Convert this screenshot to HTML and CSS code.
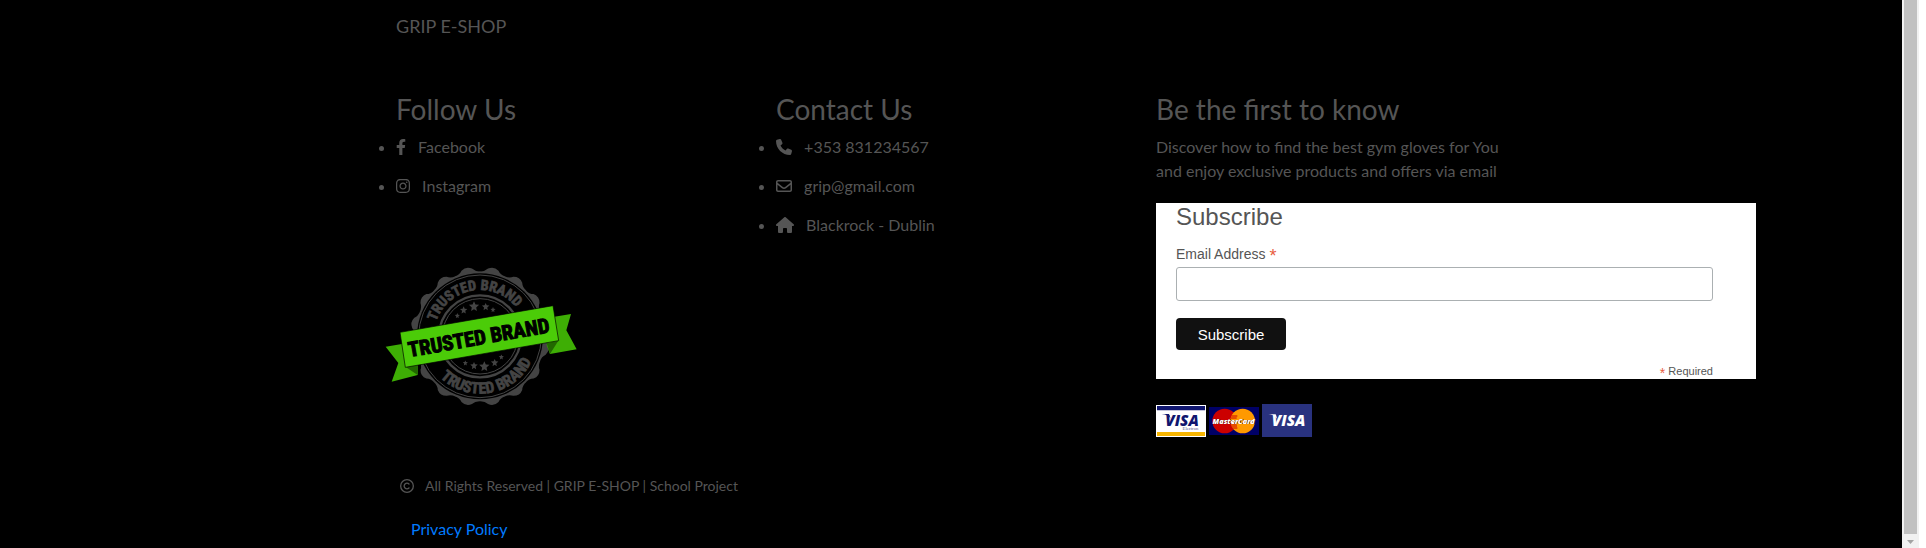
FILE: index.html
```html
<!DOCTYPE html>
<html lang="en">
<head>
<meta charset="utf-8">
<title>GRIP E-SHOP</title>
<link rel="stylesheet" href="styles.css">
</head>
<body>
<footer class="footer">
  <div class="container">
    <p class="brand">GRIP E-SHOP</p>
    <div class="columns">
      <section class="column">
        <h3 class="heading">Follow Us</h3>
        <ul class="links">
          <li><svg class="icon icon-narrow" viewBox="0 0 320 512" aria-hidden="true"><path d="M279.14 288l14.22-92.66h-88.91v-60.13c0-25.35 12.42-50.06 52.24-50.06h40.42V6.26S260.43 0 225.36 0c-73.22 0-121.08 44.38-121.08 124.72v70.62H22.89V288h81.39v224h100.17V288z"/></svg>
            Facebook</li>
          <li><svg class="icon icon-medium" viewBox="0 0 448 512" aria-hidden="true"><path d="M224.1 141c-63.6 0-114.9 51.3-114.9 114.9s51.3 114.9 114.9 114.9S339 319.500 339 255.900 287.700 141 224.100 141zm0 189.600c-41.100 0-74.700-33.500-74.700-74.700s33.500-74.700 74.700-74.700 74.700 33.500 74.700 74.700-33.600 74.700-74.700 74.700zm146.400-194.300c0 14.900-12 26.800-26.800 26.800-14.900 0-26.800-12-26.800-26.800s12-26.800 26.800-26.800 26.800 12 26.800 26.800zm76.100 27.200c-1.700-35.900-9.900-67.700-36.200-93.900-26.200-26.200-58-34.400-93.900-36.200-37-2.100-147.900-2.100-184.900 0-35.800 1.700-67.600 9.900-93.900 36.100s-34.400 58-36.200 93.900c-2.100 37-2.100 147.900 0 184.900 1.700 35.900 9.900 67.700 36.200 93.900s58 34.400 93.900 36.200c37 2.100 147.900 2.100 184.900 0 35.900-1.700 67.700-9.900 93.900-36.200 26.200-26.200 34.400-58 36.200-93.900 2.100-37 2.100-147.800 0-184.800zM398.800 388c-7.800 19.600-22.900 34.700-42.600 42.600-29.500 11.700-99.500 9-132.100 9s-102.700 2.600-132.100-9c-19.600-7.800-34.700-22.900-42.600-42.600-11.700-29.500-9-99.500-9-132.100s-2.600-102.700 9-132.100c7.800-19.600 22.900-34.700 42.600-42.600 29.500-11.700 99.500-9 132.100-9s102.700-2.600 132.100 9c19.600 7.800 34.700 22.900 42.600 42.600 11.700 29.500 9 99.500 9 132.100s2.700 102.700-9 132.100z"/></svg>
            Instagram</li>
        </ul>
        <svg class="badge" viewBox="45 48 576 423" role="img" aria-label="Trusted brand">
          <defs>
            <path id="bump" d="M-39-191Q-24-193-16-204Q0-215 16-204Q24-193 39-191L36-180H-36Z"/>
            <g id="bumps"><use href="#bump" transform="rotate(11.25)"/><use href="#bump" transform="rotate(33.75)"/><use href="#bump" transform="rotate(56.25)"/><use href="#bump" transform="rotate(78.75)"/></g>
            <path id="star" d="M0-14L4-5 14-4 6 3 8 13 0 8-8 13-6 3-14-4-4-5Z"/>
            <path id="arc-top" d="M191 259A139 139 0 0 1 469 259"/>
            <path id="arc-bottom" d="M158 259A172 172 0 0 0 502 259"/>
          </defs>
          <g class="seal">
            <g transform="translate(330 259)">
              <circle r="193"/>
              <use href="#bumps"/><use href="#bumps" transform="rotate(90)"/><use href="#bumps" transform="rotate(180)"/><use href="#bumps" transform="rotate(270)"/>
              <circle class="hole" r="189"/>
              <circle class="line" r="184"/>
              <circle class="ring" r="123"/>
              <circle class="line" r="113"/>
              <use href="#star" transform="translate(-68 -62) scale(.55)"/>
              <use href="#star" transform="translate(-49 -79) scale(.8)"/>
              <use href="#star" transform="translate(-18 -90) scale(1.1)"/>
              <use href="#star" transform="translate(17 -89) scale(.8)"/>
              <use href="#star" transform="translate(39 -80) scale(.55)"/>
              <use href="#star" transform="translate(-44 80) scale(.55)"/>
              <use href="#star" transform="translate(-18 88) scale(.8)"/>
              <use href="#star" transform="translate(13 90) scale(1.1)"/>
              <use href="#star" transform="translate(44 79) scale(.8)"/>
              <use href="#star" transform="translate(64 62) scale(.55)"/>
            </g>
            <g transform="rotate(-10 330 259)">
              <text class="seal-top"><textPath href="#arc-top" startOffset="50%">TRUSTED BRAND</textPath></text>
              <text class="seal-bottom"><textPath href="#arc-bottom" startOffset="50%">TRUSTED BRAND</textPath></text>
            </g>
          </g>
          <path class="tail" d="M47 290L100 281 143 348V375L65 395 85 339Z"/>
          <path class="tail" d="M553 200L603 192 589 241 620 298 540 312 530 285Z"/>
          <path class="fold" d="M106 350L143 345V375ZM565 272L530 280 540 312Z"/>
          <path class="banner" d="M90 247L549 167 566 272 106 352Z"/>
          <text class="banner-text" transform="translate(330 284) rotate(-10)">TRUSTED BRAND</text>
        </svg>
      </section>
      <section class="column">
        <h3 class="heading">Contact Us</h3>
        <ul class="links">
          <li><svg class="icon" viewBox="0 0 512 512" aria-hidden="true"><path d="M164.9 24.6c-7.7-18.6-28-28.5-47.4-23.2l-88 24C12.1 30.2 0 46 0 64C0 311.4 200.6 512 448 512c18 0 33.8-12.1 38.6-29.5l24-88c5.3-19.4-4.6-39.7-23.2-47.4l-96-40c-16.3-6.8-35.2-2.1-46.3 11.6L304.700 368C234.300 334.700 177.300 277.700 144 207.300L193.300 167c13.700-11.200 18.400-30 11.600-46.300l-40-96z"/></svg>
            +353 831234567</li>
          <li><svg class="icon" viewBox="0 0 512 512" aria-hidden="true"><path d="M64 112c-8.800 0-16 7.200-16 16v22.100L220.500 291.700c20.700 17 50.400 17 71.100 0L464 150.100V128c0-8.800-7.200-16-16-16H64zM48 212.200V384c0 8.800 7.200 16 16 16H448c8.800 0 16-7.200 16-16V212.200L322 328.800c-38.400 31.500-93.700 31.500-132 0L48 212.200zM0 128C0 92.700 28.700 64 64 64H448c35.300 0 64 28.700 64 64V384c0 35.300-28.700 64-64 64H64c-35.300 0-64-28.700-64-64V128z"/></svg>
            grip@gmail.com</li>
          <li><svg class="icon icon-wide" viewBox="0 0 576 512" aria-hidden="true"><path d="M575.8 255.500c0 18-15 32.100-32 32.100h-32l.7 160.200c0 2.700-.2 5.400-.5 8.100V472c0 22.100-17.900 40-40 40H456c-1.100 0-2.200 0-3.300-.1c-1.400 .1-2.800 .1-4.200 .1H416 392c-22.100 0-40-17.900-40-40V448 384c0-17.700-14.300-32-32-32H256c-17.700 0-32 14.300-32 32v64 24c0 22.100-17.900 40-40 40H160 128.100c-1.500 0-3-.1-4.500-.2c-1.200 .1-2.400 .2-3.600 .2H104c-22.100 0-40-17.900-40-40V360c0-.9 0-1.900 .1-2.800V287.600H32c-18 0-32-14-32-32.100c0-9 3-17 10-24L266.400 8c7-7 15-8 22-8s15 2 21 7L564.800 231.500c8 7 12 15 11 24z"/></svg>
            Blackrock - Dublin</li>
        </ul>
      </section>
      <section class="column">
        <h3 class="heading">Be the first to know</h3>
        <p class="intro">Discover how to find the best gym gloves for You<br>and enjoy exclusive products and offers via email</p>
        <form class="signup">
          <h2 class="signup-title">Subscribe</h2>
          <label class="signup-label" for="email">Email Address <span class="asterisk">*</span></label>
          <input class="signup-input" id="email" type="email" required>
          <button class="signup-button" type="submit">Subscribe</button>
          <p class="signup-note"><span class="asterisk">*</span> Required</p>
        </form>
        <div class="cards">
          <svg class="card" viewBox="0 0 150 96" role="img" aria-label="Visa Electron">
            <path fill="#fff" d="M0 0h150v96H0z"/><path fill="#10166f" d="M3 3h144v13H3z"/><path fill="#f7b500" d="M3 81h144v12H3z"/>
            <path fill="#10166f" d="M17 27h22l5 14c-5-8-13-13-27-14z"/>
            <text class="visa visa-blue" x="78" y="63">VISA</text>
            <text class="electron" x="127" y="76">Electron</text>
          </svg>
          <svg class="card" viewBox="0 0 150 84" role="img" aria-label="MasterCard">
            <path fill="#000066" d="M0 0h150v84H0z"/><circle cx="47" cy="42" r="37" fill="#cc0000"/><circle cx="101" cy="42" r="37" fill="#ff9900"/>
            <path stroke="#cc0000" stroke-width="3" d="M67 27h18M65 33h18M65 51h18M66 57h18M69 63h16"/>
            <text class="mastercard-shadow" x="76" y="52">MasterCard</text>
            <text class="mastercard" x="74" y="50">MasterCard</text>
          </svg>
          <svg class="card" viewBox="0 0 150 99" role="img" aria-label="Visa">
            <path fill="#29327f" d="M0 0h150v99H0z"/><path fill="#fff" d="M19 31h22l5 14c-5-8-13-13-27-14z"/>
            <text class="visa visa-white" x="80" y="67">VISA</text>
          </svg>
        </div>
      </section>
    </div>
    <p class="copyright"><svg class="icon icon-copyright" viewBox="0 0 512 512" aria-hidden="true"><path d="M256 48a208 208 0 1 1 0 416 208 208 0 1 1 0-416zm0 464A256 256 0 1 0 256 0a256 256 0 1 0 0 512zM199.400 312.600c-31.200-31.200-31.200-81.900 0-113.100s81.900-31.200 113.100 0c9.400 9.400 24.600 9.400 33.900 0s9.400-24.600 0-33.900c-50-50-131-50-181 0s-50 131 0 181s131 50 181 0c9.400-9.400 9.400-24.600 0-33.900s-24.600-9.400-33.900 0c-31.200 31.200-81.900 31.200-113.100 0z"/></svg>
      All Rights Reserved | GRIP E-SHOP | School Project</p>
    <a class="privacy" href="#privacy">Privacy Policy</a>
  </div>
</footer>
<div class="scrollbar" aria-hidden="true">
  <div class="scroll-thumb"></div>
  <svg class="scroll-arrow" viewBox="0 0 7 4"><path d="M0 0h7L3.500 4z"/></svg>
</div>
</body>
</html>
```
FILE: styles.css
```css
* {
  box-sizing: border-box;
}

body {
  display: flex;
  min-height: 100vh;
  margin: 0;
  padding-right: 7px;
  background: #fff;
  color: #555;
  font: 16px/24px Lato, sans-serif;
}

h2,
h3,
p,
ul {
  margin: 0;
  padding: 0;
  font-weight: 400;
}

.footer {
  flex: 1;
  background: #000;
}

.container {
  max-width: 1140px;
  margin: 0 auto;
  padding: 13px 15px 0;
}

.brand {
  font-size: 18px;
  line-height: 27px;
}

.columns {
  display: grid;
  grid-template-columns: repeat(3, minmax(0, 1fr));
  gap: 30px;
  margin-top: 52px;
}

.heading {
  margin-bottom: 9px;
  font-size: 28px;
  line-height: 34px;
}

.links li {
  margin-bottom: 15px;
}

.icon {
  width: 16px;
  height: 16px;
  margin-right: 8px;
  fill: currentColor;
  vertical-align: -2px;
}

.icon-narrow {
  width: 10px;
}

.icon-medium {
  width: 14px;
}

.icon-wide {
  width: 18px;
}

.icon-copyright {
  width: 14px;
  height: 14px;
}

.badge {
  display: block;
  width: 192px;
  height: 141px;
  margin: 68px 0 0 -11px;
  font-family: "Liberation Sans Narrow", "Roboto Condensed", Roboto, sans-serif;
  font-weight: 700;
  text-anchor: middle;
}

.seal {
  fill: #444;
}

.hole {
  fill: #000;
}

.line,
.ring {
  fill: none;
  stroke: #444;
  stroke-width: 3px;
}

.ring {
  stroke-width: 7px;
}

.seal-top {
  font-size: 43px;
}

.seal-bottom {
  font-size: 47px;
}

.seal-top,
.seal-bottom {
  stroke: #444;
  stroke-width: 2px;
}

.tail {
  fill: #3eae05;
}

.fold {
  fill: #226800;
}

.banner {
  fill: #4bcc08;
  stroke: #000;
  stroke-width: 2px;
}

.banner-text {
  font-size: 62px;
  stroke: #000;
  stroke-width: 3px;
}

.signup {
  width: 600px;
  margin-top: 20px;
  padding: 0 43px 0 20px;
  background: #fff;
  font: 14px/20px "Liberation Sans", Arial, sans-serif;
}

.signup-title {
  padding-bottom: 13px;
  font-size: 24px;
  line-height: 28px;
}

.signup-label {
  display: block;
  height: 20px;
  line-height: 20px;
}

.asterisk {
  color: #e85c41;
  font-size: 18px;
  line-height: 16px;
  vertical-align: -3px;
}

.signup-input {
  display: block;
  width: 100%;
  height: 34px;
  margin: 3px 0 17px;
  padding: 0 8px;
  border: 1px solid #abb0b2;
  border-radius: 3px;
  background: #fff;
  font: inherit;
}

.signup-button {
  display: block;
  width: 110px;
  height: 32px;
  padding: 0;
  border: 0;
  border-radius: 4px;
  background: #111;
  color: #fff;
  font: 15px "Liberation Sans", Arial, sans-serif;
}

.signup-note {
  height: 29px;
  padding-top: 13px;
  font-size: 11px;
  line-height: 16px;
  text-align: right;
}

.signup-note .asterisk {
  font-size: 14px;
}

.cards {
  display: flex;
  align-items: center;
  gap: 3px;
  margin-top: 25px;
}

.card {
  width: 50px;
  font-family: "Open Sans", sans-serif;
  font-style: italic;
  font-weight: 800;
  text-anchor: middle;
}

.visa {
  font-size: 46px;
}

.visa-blue {
  fill: #10166f;
}

.visa-white {
  fill: #fff;
}

.electron {
  fill: #555a90;
  font: 14px "Liberation Serif", serif;
  text-anchor: end;
}

.mastercard,
.mastercard-shadow {
  fill: #fff;
  font-size: 22px;
}

.mastercard-shadow {
  fill: #300;
}

.copyright {
  margin: 37px 0 0 4px;
  font-size: 14px;
}

.privacy {
  display: inline-block;
  margin: 19px 0 7px 15px;
  color: #007bff;
  text-decoration: none;
}

.scrollbar {
  display: flex;
  flex-direction: column;
  align-items: center;
  width: 17px;
  background: #f1f1f1;
}

.scroll-thumb {
  flex: 1;
  width: 13px;
  background: #c1c1c1;
}

.scroll-arrow {
  width: 7px;
  height: 4px;
  margin: 6px 0 4px;
  fill: #a3a3a3;
}
```
